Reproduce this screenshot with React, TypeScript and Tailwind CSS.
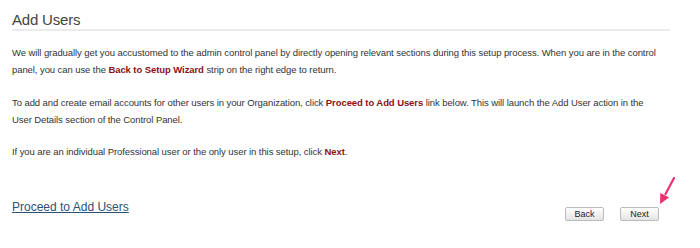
export default function App() {
  return (
    <div className="w-[700px] h-[248px] bg-white overflow-hidden font-['Liberation_Sans',Arial,sans-serif] text-[#333]">
      <div className="pl-3 pr-[30px] pt-[11px]">
        <h1 className="text-[15px] leading-[17px] tracking-[-0.2px] text-[#444] pb-[1px] border-b-2 border-[#ebebeb]">
          Add Users
        </h1>
        <div className="mt-[13px] pr-[9px] text-[9.5px] tracking-[-0.08px]">
          <p className="leading-[17px]">
            We will gradually get you accustomed to the admin control panel by directly opening relevant sections during this setup process. When you are in the control panel, you can use the{" "}
            <b className="text-[#8b1018]">Back to Setup Wizard</b> strip on the right edge to return.
          </p>
          <p className="leading-[17px] mt-4">
            To add and create email accounts for other users in your Organization, click{" "}
            <b className="text-[#8b1018]">Proceed to Add Users</b> link below. This will launch the Add User action in the User Details section of the Control Panel.
          </p>
          <p className="leading-[17px] mt-[15px]">
            If you are an individual Professional user or the only user in this setup, click{" "}
            <b className="text-[#8b1018]">Next</b>.
          </p>
        </div>
        <div className="mt-[40px] flex items-start justify-between">
          <a href="#" className="text-[12px] leading-[14px] text-[#2b5275] underline">
            Proceed to Add Users
          </a>
          <div className="relative flex gap-4 mr-[11px] pt-[7px]">
            <button className="w-[39px] h-[14px] text-[9px] leading-[12px] border border-[#bbb] rounded-[2px] bg-gradient-to-b from-white to-[#e4e4e4] text-[#222]">
              Back
            </button>
            <button className="w-[39px] h-[14px] text-[9px] leading-[12px] border border-[#bbb] rounded-[2px] bg-gradient-to-b from-white to-[#e4e4e4] text-[#222]">
              Next
            </button>
            <svg className="absolute right-[-21px] top-[-26px]" width="30" height="36" viewBox="0 0 30 36">
              <path d="M24 4 L15.5 20" stroke="#e8336f" strokeWidth="2.2" strokeLinecap="round" />
              <path d="M10 30 L10.3 18.9 L19.1 23.6 Z" fill="#e8336f" />
            </svg>
          </div>
        </div>
      </div>
    </div>
  );
}
